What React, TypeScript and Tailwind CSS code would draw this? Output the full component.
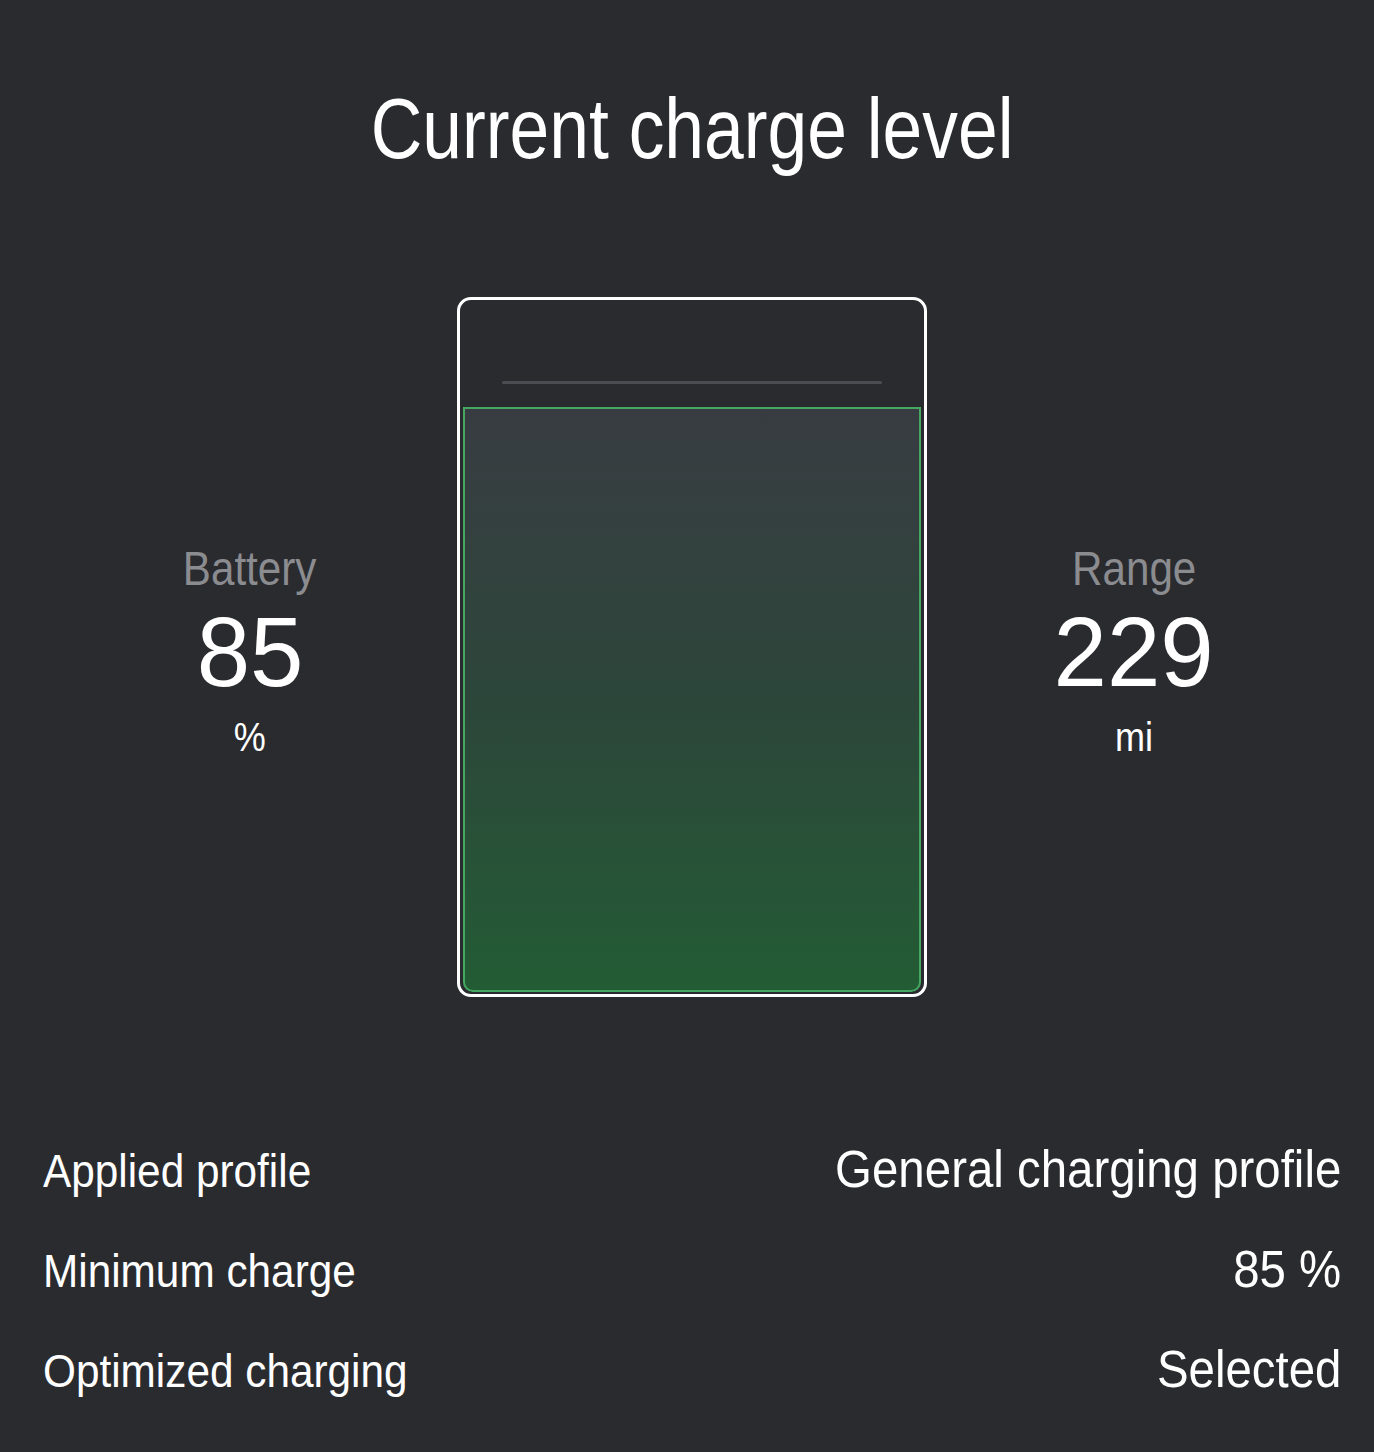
import React from 'react';

const font = { fontFamily: "'Liberation Sans', Arial, sans-serif" };

interface StatProps {
  label: string;
  value: string;
  unit: string;
}

const Stat: React.FC<StatProps> = ({ label, value, unit }) => (
  <div className="flex flex-col items-center pt-[6px]">
    <div className="scale-x-[0.86] text-[49px] leading-[49px] text-[#8b8c90]">{label}</div>
    <div className="mt-[9px] scale-x-[0.97] text-[99px] leading-none text-white">{value}</div>
    <div className="mt-[16px] scale-x-[0.9] text-[40px] leading-[40px] text-white">{unit}</div>
  </div>
);

const Battery: React.FC = () => (
  <div className="flex h-[700px] w-[470px] flex-col rounded-[14px] border-[3px] border-white">
    <div className="h-[107px] px-[42px] pt-[81px]">
      <div className="h-[3px] rounded-full bg-[#4b4c51]" />
    </div>
    <div className="mx-[3px] mb-[2px] flex-1 rounded-b-[10px] border-2 border-[#45a862] bg-gradient-to-b from-[#383c42] via-[#2c463a] to-[#225c34]" />
  </div>
);

const rows = [
  ['Applied profile', 'General charging profile'],
  ['Minimum charge', '85 %'],
  ['Optimized charging', 'Selected'],
];

export default function App() {
  return (
    <div className="min-h-[1452px] w-full bg-[#2a2b2f] pl-[43px] pr-[33px] text-white" style={font}>
      <h1 className="pt-[85px] text-center text-[86px] leading-none font-normal">
        <span className="inline-block scale-x-[0.83]">Current charge level</span>
      </h1>
      <div className="mt-[126px] grid grid-cols-[1fr_470px_1fr] items-center">
        <Stat label="Battery" value="85" unit="%" />
        <Battery />
        <Stat label="Range" value="229" unit="mi" />
      </div>
      <div className="mt-[123px] flex flex-col">
        {rows.map(([k, v]) => (
          <div key={k} className="flex h-[100px] items-baseline justify-between">
            <span className="inline-block origin-left scale-x-[0.92] text-[46px] leading-[100px]">{k}</span>
            <span className="inline-block origin-right scale-x-[0.93] text-[51px] leading-[100px]">{v}</span>
          </div>
        ))}
      </div>
    </div>
  );
}
